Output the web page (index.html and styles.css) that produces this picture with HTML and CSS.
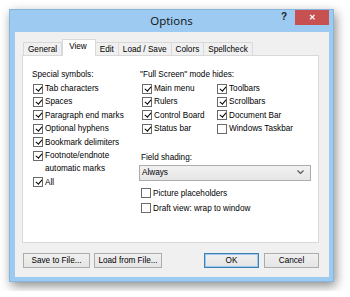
FILE: index.html
```html
<!DOCTYPE html>
<html lang="en">
<head>
    <meta charset="UTF-8">
    <title>Options</title>
    <link rel="stylesheet" href="styles.css">
</head>
<body>
    <div class="window">
        <div class="titlebar">
            <span></span>
            <span class="title">Options</span>
            <div class="controls">
                <span class="help">?</span>
                <span class="close">&#x2715;</span>
            </div>
        </div>
        <div class="client">
            <div class="tabs">
                <span class="tab">General</span>
                <span class="tab active">View</span>
                <span class="tab">Edit</span>
                <span class="tab">Load / Save</span>
                <span class="tab">Colors</span>
                <span class="tab">Spellcheck</span>
            </div>
            <div class="panel">
                <div class="col left">
                    <p class="heading">Special symbols:</p>
                    <label class="opt"><span class="cb on"></span>Tab characters</label>
                    <label class="opt"><span class="cb on"></span>Spaces</label>
                    <label class="opt"><span class="cb on"></span>Paragraph end marks</label>
                    <label class="opt"><span class="cb on"></span>Optional hyphens</label>
                    <label class="opt"><span class="cb on"></span>Bookmark delimiters</label>
                    <label class="opt"><span class="cb on"></span>Footnote/endnote<br>automatic marks</label>
                    <label class="opt"><span class="cb on"></span>All</label>
                </div>
                <div class="col right">
                    <p class="heading">"Full Screen" mode hides:</p>
                    <div class="hides">
                        <label class="opt"><span class="cb on"></span>Main menu</label>
                        <label class="opt"><span class="cb on"></span>Toolbars</label>
                        <label class="opt"><span class="cb on"></span>Rulers</label>
                        <label class="opt"><span class="cb on"></span>Scrollbars</label>
                        <label class="opt"><span class="cb on"></span>Control Board</label>
                        <label class="opt"><span class="cb on"></span>Document Bar</label>
                        <label class="opt"><span class="cb on"></span>Status bar</label>
                        <label class="opt"><span class="cb"></span>Windows Taskbar</label>
                    </div>
                    <p class="heading shading">Field shading:</p>
                    <div class="select">
                        <span>Always</span>
                        <svg width="7" height="5" viewBox="0 0 7 5"><polyline points="0.5,0.5 3.5,3.5 6.5,0.5" fill="none" stroke="#555" stroke-width="1.2"/></svg>
                    </div>
                    <label class="opt extra"><span class="cb"></span>Picture placeholders</label>
                    <label class="opt"><span class="cb"></span>Draft view: wrap to window</label>
                </div>
            </div>
            <div class="buttons">
                <button>Save to File...</button>
                <button class="load">Load from File...</button>
                <span class="spacer"></span>
                <button class="ok">OK</button>
                <button class="cancel">Cancel</button>
            </div>
        </div>
    </div>
</body>
</html>
```
FILE: styles.css
```css
body {
    margin: 0;
    padding: 9px;
    background: #fff;
    font-family: "Liberation Sans", Arial, sans-serif;
    font-size: 8.2px;
    color: #000;
}
.window {
    width: 325px;
    height: 273px;
    box-sizing: border-box;
    background: #9ccaf0;
    border: 1px solid #86b5de;
    box-shadow: 2px 4px 10px rgba(0, 0, 0, 0.45);
    display: flex;
    flex-direction: column;
}
.titlebar {
    height: 22px;
    display: grid;
    grid-template-columns: 1fr auto 1fr;
    align-items: start;
}
.title {
    font-family: "Open Sans", sans-serif;
    font-size: 11.5px;
    color: #111;
    line-height: 22px;
}
.controls {
    justify-self: end;
    display: flex;
    align-items: center;
    margin-right: 4px;
}
.help {
    font-family: "Liberation Sans", sans-serif;
    font-weight: bold;
    font-size: 10px;
    color: #222;
    margin-right: 8px;
    margin-top: -2px;
}
.close {
    width: 34px;
    height: 15px;
    background: #c75050;
    color: #fff;
    font-size: 8px;
    font-weight: bold;
    text-align: center;
    line-height: 15px;
}
.client {
    flex: 1;
    margin: 0 4px 4px 5px;
    background: #f0f0f0;
    padding: 7px 10px 9px 7px;
    display: flex;
    flex-direction: column;
}
.tabs {
    display: flex;
    align-items: flex-end;
    height: 16px;
    padding-left: 1px;
    position: relative;
    z-index: 1;
}
.tab {
    height: 13px;
    line-height: 13px;
    padding: 0 4px;
    border: 1px solid #d9d9d9;
    border-bottom: none;
    border-left: none;
    background: #f0f0f0;
    box-sizing: border-box;
}
.tab:first-child {
    border-left: 1px solid #d9d9d9;
}
.tab.active {
    height: 17px;
    line-height: 13px;
    background: #fff;
    padding: 0 8px 0 6px;
    margin-bottom: -1px;
    border-left: 1px solid #d9d9d9;
}
.panel {
    height: 188px;
    box-sizing: border-box;
    background: #fff;
    border: 1px solid #d9d9d9;
    padding: 13px 0 0 9px;
    display: grid;
    grid-template-columns: 107px 1fr;
}
.col {
    display: flex;
    flex-direction: column;
}
.heading {
    margin: 0 0 2px 0;
    line-height: 11px;
}
.opt {
    display: flex;
    align-items: flex-start;
    line-height: 13.4px;
    padding-left: 1px;
}
.cb {
    flex: none;
    width: 10px;
    height: 10px;
    box-sizing: border-box;
    border: 1px solid #6a6a6a;
    background: #fff;
    margin: 1.5px 2px 0 0;
    position: relative;
}
.cb.on::after {
    content: "";
    position: absolute;
    left: 2.5px;
    top: 0px;
    width: 2.5px;
    height: 5px;
    border: solid #000;
    border-width: 0 1.6px 1.6px 0;
    transform: rotate(40deg);
}
.right .heading {
    margin-left: 1px;
}
.hides {
    display: grid;
    grid-template-columns: 75px 1fr;
    padding-left: 2px;
}
.heading.shading {
    margin: 16px 0 2px 2px;
}
.select {
    width: 172px;
    height: 16px;
    box-sizing: border-box;
    border: 1px solid #acacac;
    background: linear-gradient(#f2f2f2, #e5e5e5);
    display: flex;
    align-items: center;
    justify-content: space-between;
    padding: 0 6px 0 2px;
}
.opt.extra {
    margin-top: 5px;
    padding-left: 2px;
    line-height: 15px;
}
.opt.extra + .opt {
    padding-left: 2px;
    line-height: 15px;
}
.extra .cb, .extra + .opt .cb {
    margin-top: 2.5px;
}
.buttons {
    display: flex;
    margin-top: 10px;
    padding-left: 1px;
}
button {
    font-family: "Liberation Sans", Arial, sans-serif;
    font-size: 8.2px;
    height: 15px;
    padding: 0;
    border: 1px solid #acacac;
    background: linear-gradient(#f0f0f0, #e5e5e5);
    color: #000;
    width: 67px;
}
.load {
    margin-left: 4px;
    width: 68px;
}
.spacer {
    flex: 1;
}
.ok {
    width: 55px;
    border-color: #3c7fb1;
    box-shadow: inset 0 0 0 1px #9ec8ee;
}
.cancel {
    width: 55px;
    margin-left: 5px;
}
```
